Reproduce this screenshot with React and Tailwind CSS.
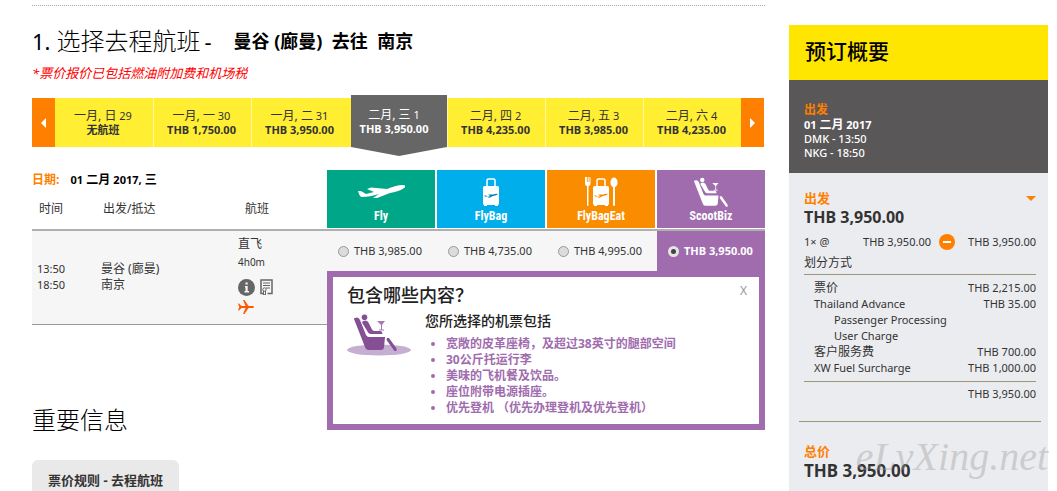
import { useState } from 'react'

const DAYS = [
  { date: '一月, 日', day: '29', price: '无航班' },
  { date: '一月, 一', day: '30', price: 'THB 1,750.00' },
  { date: '一月, 二', day: '31', price: 'THB 3,950.00' },
  { date: '二月, 三', day: '1', price: 'THB 3,950.00' },
  { date: '二月, 四', day: '2', price: 'THB 4,235.00' },
  { date: '二月, 五', day: '3', price: 'THB 3,985.00' },
  { date: '二月, 六', day: '4', price: 'THB 4,235.00' },
]

const FARES = [
  { id: 'Fly', price: 'THB 3,985.00', color: 'bg-[#00a688]', icon: <PlaneIcon /> },
  { id: 'FlyBag', price: 'THB 4,735.00', color: 'bg-[#00aeec]', icon: <BagIcon /> },
  { id: 'FlyBagEat', price: 'THB 4,995.00', color: 'bg-[#fa8c00]', icon: <BagEatIcon /> },
  { id: 'ScootBiz', price: 'THB 3,950.00', color: 'bg-[#a06cae]', icon: <SeatIcon /> },
]

const INCLUDED = [
  '宽敞的皮革座椅，及超过38英寸的腿部空间',
  '30公斤托运行李',
  '美味的飞机餐及饮品。',
  '座位附带电源插座。',
  '优先登机 （优先办理登机及优先登机）',
]

const CHARGES = [
  { label: '票价', amount: 'THB 2,215.00' },
  { label: 'Thailand Advance', more: ['Passenger Processing', 'User Charge'], amount: 'THB 35.00' },
  { label: '客户服务费', amount: 'THB 700.00' },
  { label: 'XW Fuel Surcharge', amount: 'THB 1,000.00' },
]

function PlaneIcon() {
  return (
    <svg viewBox="0 0 48 16" className="w-12 h-4" fill="#fff">
      <path d="M1 7l3 0 5 3 8-2L10 5l4-1.500 16 1.500c5-2 11-4 16-4 3 0 3 2 1 3-4 3-9 4-14 5l-13 5-4 0 6-4c-6 2-12 3-17 3C3 13 2 10 1 7z" />
    </svg>
  )
}

function BagShape({ plane }) {
  return (
    <>
      <path d="M5 9V2.500Q5 1 6.500 1h5Q13 1 13 2.500V9" fill="none" stroke="#fff" strokeWidth="1.500" />
      <rect x="1" y="8" width="16" height="19" rx="1.500" fill="#fff" />
      <path d="M2 27h3v1H2zM13 27h3v1h-3z" fill="#fff" />
      <path d="M2 17.500l2 0 1 1 3-1-2-1 5 0q3-1 5-.500-1 1.500-5 2l-4 2h-1l2-2q-3 1-5 .500z" fill={plane} />
    </>
  )
}

function BagIcon() {
  return (
    <svg viewBox="0 0 18 28" className="w-[18px] h-7">
      <BagShape plane="#0082b8" />
    </svg>
  )
}

function BagEatIcon() {
  return (
    <svg viewBox="0 0 34 30" className="w-[34px] h-[30px]">
      <path d="M1 0v6q0 3 2 3v19q0 1 .800 1t.700-1V9q2 0 2-3V0H5.500v5h-.800V0h-1v5h-.800V0z" fill="#fff" />
      <g transform="translate(8 1)">
        <BagShape plane="#fa8c00" />
      </g>
      <ellipse cx="30" cy="5.500" rx="3.500" ry="5" fill="#fff" />
      <path d="M29 9h2v19q0 1-1 1t-1-1z" fill="#fff" />
    </svg>
  )
}

function SeatShape() {
  return (
    <>
      <path d="M7 5q0-1.500 3-1.500 2 0 3 2.500l6 15q1 2 3 2h16l-1 10.500q-.500 2.500-3 2.500H21q-2 0-3-3z" />
      <circle cx="17.500" cy="3.200" r="2.800" />
      <path d="M15 8.500q0-1.500 3-2 2.500 0 3.500 2l3.500 7q1 1.500 3 1.500h5.500q2 .500 2 3H24q-2.500 0-3.500-2.500z" />
      <path d="M40 24l2 0 7.500 10.500V37h-2L39.500 26z" />
    </>
  )
}

function GlassShape() {
  return <path d="M30 7h8l-3 4v4.500h2v1h-5v-1h2V11z" />
}

function SeatIcon() {
  return (
    <svg viewBox="7 0 43 37" className="w-[34px] h-[30px]" fill="#fff">
      <SeatShape />
      <GlassShape />
    </svg>
  )
}

function SeatBadge() {
  return (
    <svg viewBox="0 0 64 42" className="w-16 h-[42px]" fill="#854f96">
      <ellipse cx="32" cy="36" rx="32" ry="5.500" fill="#c5aed0" />
      <SeatShape />
      <g fill="#a57db3">
        <GlassShape />
      </g>
    </svg>
  )
}

function DayStrip({ selected, onSelect }) {
  return (
    <div className="flex h-[49px] mr-px bg-[#ffee32]">
      <button type="button" aria-label="上一周" className="w-[23px] bg-[#ff8000] flex items-center justify-center">
        <svg viewBox="0 0 5 10" className="w-[5px] h-2.5"><path d="M5 0v10L0 5z" fill="#fff" /></svg>
      </button>
      <div className="flex-1 grid grid-cols-7">
        {DAYS.map((d, i) => {
          const active = i === selected
          return (
            <button
              key={d.day}
              type="button"
              onClick={() => onSelect(i)}
              className={
                active
                  ? 'relative -mt-[3px] ml-0.5 pt-0.5 pr-2.5 bg-[#666] text-white text-[11px] leading-[14px]'
                  : `pr-0.5 text-[#333] text-[11px] leading-[14px] ${i > 0 ? 'border-l border-[#fff7a0]' : ''}`
              }
            >
              <div><span className="text-xs leading-[14px]">{d.date}</span> {d.day}</div>
              <div className="font-bold">{d.price}</div>
              {active && (
                <svg viewBox="0 0 96 9" preserveAspectRatio="none" className="absolute top-full left-0 w-full h-[9px]">
                  <path d="M0 0h96L48 9z" fill="#666" />
                </svg>
              )}
            </button>
          )
        })}
      </div>
      <button type="button" aria-label="下一周" className="w-[23px] bg-[#ff8000] flex items-center justify-center">
        <svg viewBox="0 0 5 10" className="w-[5px] h-2.5"><path d="M0 0v10l5-5z" fill="#fff" /></svg>
      </button>
    </div>
  )
}

function FlightTable({ fare, onFare }) {
  return (
    <table className="w-full table-fixed border-separate border-spacing-0 text-left text-xs text-[#333]">
      <colgroup>
        <col className="w-[69px]" />
        <col />
        <col className="w-[89px]" />
        <col className="w-[110px]" />
        <col className="w-[110px]" />
        <col className="w-[110px]" />
        <col className="w-[108px]" />
      </colgroup>
      <thead>
        <tr className="h-[22px]">
          <td colSpan={3} className="p-0 font-bold text-black leading-5 align-top">
            <span className="text-[#ff8000] mr-2">日期:</span> <span className="text-[11px]">01</span> 二月 <span className="text-[11px]">2017,</span> 三
          </td>
          {FARES.map((f) => (
            <th key={f.id} rowSpan={2} className="p-0 pb-px border-b-2 border-[#b0b0b0] align-top">
              <div className={`h-[58px] pt-1.5 flex flex-col items-center text-white ${f.color} ${f.id === 'ScootBiz' ? '' : 'mr-0.5'}`}>
                <div className="h-8 flex items-center">{f.icon}</div>
                <span className="font-['Liberation_Sans_Narrow','Roboto_Condensed','Liberation_Sans',sans-serif] font-bold text-xs leading-4">{f.id}</span>
              </div>
            </th>
          ))}
        </tr>
        <tr className="h-[39px]">
          <th className="p-0 pb-1 pl-[7px] font-normal border-b-2 border-[#b0b0b0]">时间</th>
          <th className="p-0 pb-1 pl-0.5 font-normal border-b-2 border-[#b0b0b0]">出发/抵达</th>
          <th className="p-0 pb-1 pl-[7px] font-normal border-b-2 border-[#b0b0b0]">航班</th>
        </tr>
      </thead>
      <tbody>
        <tr className="h-[94px] bg-[#f6f6f6]">
          <td className="p-0 pb-0.5 pl-[5px] text-[11px] leading-4 border-b border-[#999]">13:50<br />18:50</td>
          <td className="p-0 pb-0.5 leading-4 border-b border-[#999]">曼谷 (廊曼)<br />南京</td>
          <td className="p-0 pt-[5px] align-top border-b border-[#999]">
            <div className="leading-4">直飞</div>
            <div className="text-[10px] leading-5">4h0m</div>
            <div className="mt-[7px] flex gap-[5px]">
              <svg viewBox="0 0 17 17" className="w-[17px] h-[17px]">
                <circle cx="8.500" cy="8.500" r="8.500" fill="#666" />
                <path d="M7.500 3.500h2.200v2H7.500zM7 7h2.700v5H11v1.500H6.500V12h1V8.500H7z" fill="#f6f6f6" />
              </svg>
              <svg viewBox="0 0 13 16" className="w-[13px] h-4" fill="none" stroke="#666">
                <path d="M4 14.500H1V1h11v13.500H7.500" strokeWidth="1.500" />
                <path d="M3 4h7M3 6.500h7M6 9h4" />
                <circle cx="4.500" cy="10.500" r="1.700" />
                <path d="M3.500 12v4l1-1 1 1v-4" />
              </svg>
            </div>
            <svg viewBox="0 0 16 14" className="mt-1 w-4 h-3.5" fill="#ff5a00">
              <path d="M0 3.500h1l2.500 2.500h4L5 0h1.500l4 6h4Q16 6 16 7t-1.500 1h-4l-4 6H5l2.500-6h-4L1 10.500H0L1.300 7z" />
            </svg>
          </td>
          {FARES.map((f) => (
            <td
              key={f.id}
              className={
                fare === f.id
                  ? 'p-0 align-top border-b border-[#999] bg-[#a06cae] text-white font-bold'
                  : 'p-0 align-top border-b border-[#999]'
              }
            >
              <label className="h-10 pl-[11px] flex items-center gap-[5px] text-[11px] whitespace-nowrap">
                <input
                  type="radio"
                  name="fare"
                  checked={fare === f.id}
                  onChange={() => onFare(f.id)}
                  className="appearance-none shrink-0 w-[11px] h-[11px] rounded-full border border-[#999] bg-[#dcdcdc] checked:border-[3px] checked:border-[#e4e4e4] checked:bg-[#444]"
                />
                {f.price}
              </label>
            </td>
          ))}
        </tr>
      </tbody>
    </table>
  )
}

function IncludedPopup({ onClose }) {
  return (
    <div className="absolute right-0 top-[101px] w-[438px] h-[159px] border-6 border-[#a06cae] bg-white pl-3.5 pr-3">
      <div className="flex justify-between pt-1.5">
        <h3 className="text-[18px] leading-6 font-medium text-[#222]">包含哪些内容？</h3>
        <button type="button" onClick={onClose} aria-label="关闭" className="self-start text-[#999] text-xs leading-4">X</button>
      </div>
      <div className="flex gap-3.5">
        <div className="pt-[7px]"><SeatBadge /></div>
        <div className="pt-1">
          <h4 className="text-sm leading-5 font-medium text-[#222]">您所选择的机票包括</h4>
          <ul className="mt-[5px] pl-[21px] list-disc text-xs leading-4 font-bold text-[#a06cae]">
            {INCLUDED.map((item) => (
              <li key={item}>{item}</li>
            ))}
          </ul>
        </div>
      </div>
    </div>
  )
}

function Summary() {
  return (
    <aside className="relative w-[259px] shrink-0 mt-[25px] bg-[#ebecf0] text-[11px] text-[#333]">
      <h2 className="h-[55px] px-4 pb-0.5 flex items-center bg-[#ffe600] text-black text-[21px] font-medium">预订概要</h2>
      <div className="h-[93px] px-[15px] pt-[22px] bg-[#595758] text-white leading-[14px]">
        <div className="text-xs leading-4 font-bold text-[#ff8000]">出发</div>
        <div className="font-bold">01 <span className="text-xs leading-[14px]">二月</span> 2017</div>
        <div className="font-medium">DMK - 13:50</div>
        <div className="font-medium">NKG - 18:50</div>
      </div>

      <div className="pl-2.5 pr-[7px]">
        <div className="px-[5px] pt-4">
          <div className="flex justify-between items-center text-[13px] leading-[18px] font-bold text-[#ff8000]">
            出发
            <svg viewBox="0 0 10 5" className="w-2.5 h-[5px]"><path d="M0 0h10L5 5z" fill="#ff8000" /></svg>
          </div>
          <div className="text-base leading-5 font-bold">THB 3,950.00</div>
          <div className="mt-[7px] flex items-center leading-4">
            <span className="flex-1">1× @</span>
            <span>THB 3,950.00</span>
            <button type="button" aria-label="收起" className="mx-2 w-4 h-4 rounded-full bg-[#ff8000] flex items-center justify-center">
              <span className="w-2 h-0.5 bg-white" />
            </button>
            <span className="w-[73px] text-right">THB 3,950.00</span>
          </div>
          <div className="mt-[3px] text-xs leading-5">划分方式</div>

          {/* Price breakdown */}
          <table className="mt-px w-full border-y border-[#9a9678] border-separate border-spacing-0 py-[5px] leading-4">
            <tbody>
              {CHARGES.map((c) => (
                <tr key={c.label} className="align-top">
                  <td className="p-0 pl-2.5">
                    {/[a-z]/i.test(c.label) ? c.label : <span className="text-xs">{c.label}</span>}
                    {c.more?.map((line) => (
                      <div key={line} className="pl-5">{line}</div>
                    ))}
                  </td>
                  <td className="p-0 text-right whitespace-nowrap">{c.amount}</td>
                </tr>
              ))}
            </tbody>
          </table>
          <div className="pt-1 text-right leading-4">THB 3,950.00</div>
        </div>

        <div className="mt-[19px] px-[5px] pt-[19px] pb-2.5 border-t border-[#9a9678]">
          <div className="text-[13px] leading-5 font-bold text-[#ff8000]">总价</div>
          <div className="text-[17px] leading-5 font-bold">THB 3,950.00</div>
        </div>
      </div>
      <span className="absolute right-0 bottom-2.5 text-[40px] leading-[48px] italic text-[#999]/40 font-['Liberation_Serif',serif]">eLvXing.net</span>
    </aside>
  )
}

export default function App() {
  const [day, setDay] = useState(3)
  const [fare, setFare] = useState('ScootBiz')
  const [showPopup, setShowPopup] = useState(true)

  return (
    <div lang="zh-CN" className="flex gap-6 pl-8 pr-[9px] bg-white font-['Noto_Sans','Noto_Sans_CJK_SC',sans-serif]">
      <main className="flex-1 min-w-0">
        <div className="mt-[5px] border-t border-dotted border-[#aaa]" />
        <h1 className="mt-[19px] flex items-center leading-8 text-black">
          <span className="text-[22px]">1.</span>
          <span className="ml-1.5 text-2xl font-light">选择去程航班</span>
          <span className="ml-1 text-[22px]">-</span>
          <span className="ml-[22px] text-[18px] font-bold whitespace-pre">曼谷 (廊曼)  去往  南京</span>
        </h1>
        <p className="mt-2 mb-[17px] text-[13px] leading-4 italic text-[#f00]">*票价报价已包括燃油附加费和机场税</p>

        <DayStrip selected={day} onSelect={setDay} />

        <div className="relative mt-[23px]">
          <FlightTable fare={fare} onFare={setFare} />
          {showPopup && <IncludedPopup onClose={() => setShowPopup(false)} />}
        </div>

        <h2 className="mt-[79px] text-2xl leading-8 font-light text-black">重要信息</h2>
        <button type="button" className="mt-6 h-[31px] px-4 pt-2 rounded-t-md bg-[#e9e9e9] text-[13px] leading-5 font-bold text-[#333]">
          票价规则 - 去程航班
        </button>
      </main>
      <Summary />
    </div>
  )
}
